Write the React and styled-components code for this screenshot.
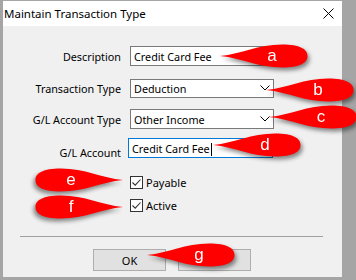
import React from "react";
import styled, { createGlobalStyle } from "styled-components";

const GlobalStyle = createGlobalStyle`
  html, body {
    margin: 0;
    padding: 0;
    background: #a5a5a5;
  }
  body {
    width: 356px;
    height: 280px;
    overflow: hidden;
    font-family: "Noto Sans", "Liberation Sans", sans-serif;
  }
`;

const Dialog = styled.div`
  position: relative;
  width: 339px;
  height: 276px;
  margin: 1px 14px 3px 3px;
  background: #f0f0f0;
  display: flex;
  flex-direction: column;
`;

const TitleBar = styled.div`
  height: 25px;
  background: #fff;
  display: flex;
  align-items: center;
  justify-content: space-between;
  padding: 0 8px 0 1px;
  font-size: 11.5px;
  color: #000;
`;

const Body = styled.div`
  flex: 1;
  display: flex;
  flex-direction: column;
  padding-top: 20px;
`;

const Row = styled.div`
  display: flex;
  align-items: center;
  height: 20px;
  margin-top: ${({ $top }) => $top || 0}px;
`;

const Label = styled.label`
  width: 118px;
  text-align: right;
  font-size: 10.8px;
  color: #000;
  margin-right: ${({ $gap }) => $gap || 9}px;
  padding-top: ${({ $drop }) => $drop || 0}px;
`;

const Field = styled.div`
  box-sizing: border-box;
  width: ${({ $w }) => $w || 144}px;
  height: ${({ $h }) => $h || 20}px;
  background: #fff;
  border: 1px solid ${({ $focus }) => ($focus ? "#0078d7" : "#7a7a7a")};
  display: flex;
  align-items: center;
  justify-content: space-between;
  padding: 0 3px 0 3px;
  font-size: 10.8px;
  color: #000;
`;

const Caret = styled.span`
  display: inline-block;
  width: 1px;
  height: 13px;
  background: #000;
  margin-left: 1px;
  vertical-align: -3px;
`;

const CheckRow = styled.div`
  display: flex;
  align-items: center;
  height: 13px;
  margin-left: 127px;
  margin-top: ${({ $top }) => $top}px;
  font-size: 11px;
  gap: 3px;
`;

const Box = styled.span`
  box-sizing: border-box;
  width: 13px;
  height: 13px;
  background: #fff;
  border: 1px solid #333;
  display: flex;
  align-items: center;
  justify-content: center;
`;

const Separator = styled.div`
  height: 1px;
  background: #a0a0a0;
  margin: 24px 19px 0 17px;
`;

const Buttons = styled.div`
  display: flex;
  gap: 12px;
  margin: 12px 0 0 90px;
`;

const Button = styled.div`
  box-sizing: border-box;
  width: 73px;
  height: 22px;
  background: #e1e1e1;
  border: 1px solid #adadad;
  display: flex;
  align-items: center;
  justify-content: center;
  font-size: 11px;
  color: #000;
`;

const CalloutWrap = styled.div`
  position: absolute;
  width: 88px;
  height: 24px;
  filter: drop-shadow(2px 3px 2px rgba(0, 0, 0, 0.45));
  transform: ${({ $flip }) => ($flip ? "scaleX(-1)" : "none")};
  svg {
    display: block;
  }
`;

const Letter = styled.span`
  position: absolute;
  top: 0;
  left: 52px;
  height: 24px;
  line-height: 23px;
  transform: translateX(-50%) ${({ $flip }) => ($flip ? "scaleX(-1)" : "")};
  font-family: "Liberation Sans", Arial, sans-serif;
  font-size: 17px;
  color: #fff;
`;

const Check = () => (
  <Box>
    <svg width="11" height="11" viewBox="0 0 11 11">
      <path d="M1.5 5.5 L4.2 8.2 L9.5 2.5" fill="none" stroke="#333" strokeWidth="1.1" />
    </svg>
  </Box>
);

const Chevron = () => (
  <svg width="10" height="6" viewBox="0 0 10 6">
    <path d="M0.5 0.5 L5 5 L9.5 0.5" fill="none" stroke="#000" strokeWidth="1" />
  </svg>
);

// tip sits at (x, y); flip makes the tip point right
const Callout = ({ x, y, letter, flip }) => (
  <CalloutWrap
    $flip={flip}
    style={{ left: flip ? x - 88 : x, top: y - 12 }}
  >
    <svg width="88" height="24" viewBox="0 0 88 24">
      <path
        d="M0 12 C 22 10 38 0.5 62 0.5 C 80 0.5 87.5 5 87.5 12 C 87.5 19 80 23.5 62 23.5 C 38 23.5 22 14 0 12 Z"
        fill="#ff0000"
      />
    </svg>
    <Letter $flip={flip}>{letter}</Letter>
  </CalloutWrap>
);

export default function App() {
  return (
    <>
      <GlobalStyle />
      <Dialog>
        <TitleBar>
          <span>Maintain Transaction Type</span>
          <svg width="11" height="11" viewBox="0 0 11 11">
            <path d="M0.5 0.5 L10.5 10.5 M10.5 0.5 L0.5 10.5" stroke="#000" strokeWidth="1" />
          </svg>
        </TitleBar>
        <Body>
          <Row>
            <Label>Description</Label>
            <Field>Credit Card Fee</Field>
          </Row>
          <Row $top={12}>
            <Label>Transaction Type</Label>
            <Field $h={19}>
              Deduction
              <Chevron />
            </Field>
          </Row>
          <Row $top={11}>
            <Label>G/L Account Type</Label>
            <Field>
              Other Income
              <Chevron />
            </Field>
          </Row>
          <Row $top={9}>
            <Label $gap={7} $drop={8}>G/L Account</Label>
            <Field $focus $w={145}>
              <span>
                Credit Card Fee
                <Caret />
              </span>
            </Field>
          </Row>
          <CheckRow $top={18}>
            <Check />
            Payable
          </CheckRow>
          <CheckRow $top={10}>
            <Check />
            Active
          </CheckRow>
          <Separator />
          <Buttons>
            <Button>OK</Button>
            <Button aria-label="Cancel" />
          </Buttons>
        </Body>
        <Callout x={217} y={55} letter="a" />
        <Callout x={263} y={89} letter="b" />
        <Callout x={266} y={116} letter="c" />
        <Callout x={210} y={144} letter="d" />
        <Callout x={120} y={179} letter="e" flip />
        <Callout x={120} y={206} letter="f" flip />
        <Callout x={144} y={254} letter="g" />
      </Dialog>
    </>
  );
}
